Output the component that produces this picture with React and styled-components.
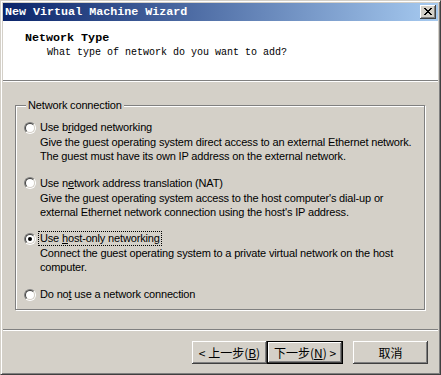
import React from "react";
import styled, { createGlobalStyle, css } from "styled-components";

const GlobalStyle = createGlobalStyle`
  html, body {
    margin: 0;
    padding: 0;
    background: #d4d0c8;
  }
  body {
    font-family: "Liberation Sans", Arial, sans-serif;
    font-size: 11px;
    letter-spacing: -0.16px;
    color: #000;
  }
`;

const bevel = css`
  box-shadow: inset -1px -1px #404040, inset 1px 1px #ffffff,
    inset -2px -2px #808080, inset 2px 2px #d4d0c8;
`;

const Window = styled.div`
  width: 441px;
  height: 375px;
  box-sizing: border-box;
  background: #d4d0c8;
  border: 1px solid;
  border-color: #d4d0c8 #404040 #404040 #d4d0c8;
  box-shadow: inset 1px 1px #ffffff, inset -1px -1px #808080;
  padding: 2px;
  display: flex;
  flex-direction: column;
`;

const TitleBar = styled.div`
  height: 18px;
  flex: none;
  display: flex;
  align-items: center;
  justify-content: space-between;
  padding: 0 2px 0 2px;
  background: linear-gradient(to right, #0a246a, #a6caf0);
`;

const Title = styled.span`
  font-family: "Liberation Mono", "DejaVu Sans Mono", monospace;
  font-weight: bold;
  font-size: 11.7px;
  letter-spacing: 0;
  color: #ffffff;
  line-height: 18px;
`;

const CloseButton = styled.div`
  width: 16px;
  height: 14px;
  background: #d4d0c8;
  ${bevel};
  display: flex;
  align-items: center;
  justify-content: center;
  padding-bottom: 1px;
  box-sizing: border-box;
`;

const Header = styled.div`
  flex: none;
  height: 59px;
  box-sizing: border-box;
  background: #ffffff;
  padding: 10px 22px 0;
  font-family: "Liberation Mono", "DejaVu Sans Mono", monospace;
  letter-spacing: 0;
`;

const HeaderTitle = styled.div`
  font-weight: bold;
  font-size: 11.7px;
  line-height: 14px;
`;

const HeaderSub = styled.div`
  font-size: 10px;
  line-height: 14px;
  padding-left: 22px;
  margin-top: 1px;
`;

const Etched = styled.div`
  flex: none;
  height: 0;
  border-top: 1px solid #808080;
  border-bottom: 1px solid #ffffff;
`;

const Content = styled.div`
  flex: 1;
  padding: 23px 13px 0 12px;
`;

const GroupBox = styled.div`
  position: relative;
  border: 1px solid #808080;
  box-shadow: inset 1px 1px #ffffff, 1px 1px #ffffff;
  padding: 14px 8px 7px 8px;
`;

const Legend = styled.span`
  position: absolute;
  top: -8px;
  left: 10px;
  padding: 0 2px;
  line-height: 14px;
  background: #d4d0c8;
`;

const Options = styled.div`
  display: flex;
  flex-direction: column;
  gap: 12.7px;
`;

const Option = styled.div`
  display: grid;
  grid-template-columns: 12px auto;
  column-gap: 3px;
  align-items: center;
`;

const Radio = styled.span`
  position: relative;
  width: 12px;
  height: 12px;
  box-sizing: border-box;
  border-radius: 50%;
  border: 1px solid;
  border-color: #808080 #ffffff #ffffff #808080;

  &::before {
    content: "";
    position: absolute;
    inset: 0;
    border-radius: 50%;
    border: 1px solid;
    border-color: #404040 #d4d0c8 #d4d0c8 #404040;
    background: #ffffff;
  }

  &::after {
    content: "";
    position: absolute;
    left: 3px;
    top: 3px;
    width: 4px;
    height: 4px;
    border-radius: 50%;
    background: ${(p) => (p.checked ? "#000" : "transparent")};
  }
`;

const Label = styled.span`
  justify-self: start;
  line-height: 13px;
  height: 13px;
  margin: 1px 0;
  padding: 0 1px;
  white-space: nowrap;
  outline: ${(p) => (p.focused ? "1px dotted #000" : "none")};
`;

const Description = styled.div`
  grid-column: 2;
  padding-left: 1px;
  line-height: 14px;
  white-space: nowrap;
`;

const Key = styled.span`
  text-decoration: underline;
`;

const Footer = styled.div`
  flex: none;
  height: 41px;
  box-sizing: border-box;
  padding: 10px 10px 0 0;
  display: flex;
  justify-content: flex-end;
`;

const Button = styled.button`
  width: ${(p) => (p.isDefault ? "76px" : "75px")};
  height: 23px;
  box-sizing: border-box;
  margin: 0;
  padding: 0;
  margin-left: ${(p) => p.gap || 0}px;
  background: #d4d0c8;
  font-family: "Noto Sans CJK SC", "Liberation Sans", sans-serif;
  font-size: 12px;
  letter-spacing: 0;
  color: #000;
  border: ${(p) => (p.isDefault ? "1px solid #000" : "none")};
  ${bevel};
`;

const CloseIcon = () => (
  <svg width="8" height="7" viewBox="0 0 8 7" shapeRendering="crispEdges">
    <path
      d="M0 0h2v1H0zM6 0h2v1H6zM1 1h2v1H1zM5 1h2v1H5zM2 2h4v1H2zM3 3h2v1H3zM2 4h4v1H2zM1 5h2v1H1zM5 5h2v1H5zM0 6h2v1H0zM6 6h2v1H6z"
      fill="#000"
    />
  </svg>
);

const options = [
  {
    label: (
      <>
        Use b<Key>r</Key>idged networking
      </>
    ),
    desc: [
      "Give the guest operating system direct access to an external Ethernet network.",
      "The guest must have its own IP address on the external network.",
    ],
  },
  {
    label: (
      <>
        Use n<Key>e</Key>twork address translation (NAT)
      </>
    ),
    desc: [
      "Give the guest operating system access to the host computer's dial-up or",
      "external Ethernet network connection using the host's IP address.",
    ],
  },
  {
    label: (
      <>
        Use <Key>h</Key>ost-only networking
      </>
    ),
    desc: [
      "Connect the guest operating system to a private virtual network on the host",
      "computer.",
    ],
    checked: true,
  },
  {
    label: (
      <>
        Do no<Key>t</Key> use a network connection
      </>
    ),
    desc: [],
  },
];

export default function App() {
  return (
    <>
      <GlobalStyle />
      <Window>
        <TitleBar>
          <Title>New Virtual Machine Wizard</Title>
          <CloseButton>
            <CloseIcon />
          </CloseButton>
        </TitleBar>
        <Header>
          <HeaderTitle>Network Type</HeaderTitle>
          <HeaderSub>What type of network do you want to add?</HeaderSub>
        </Header>
        <Etched />
        <Content>
          <GroupBox>
            <Legend>Network connection</Legend>
            <Options>
              {options.map((o, i) => (
                <Option key={i}>
                  <Radio checked={o.checked} />
                  <Label focused={o.checked}>{o.label}</Label>
                  {o.desc.length > 0 && (
                    <Description>
                      {o.desc.map((line, j) => (
                        <div key={j}>{line}</div>
                      ))}
                    </Description>
                  )}
                </Option>
              ))}
            </Options>
          </GroupBox>
        </Content>
        <Etched />
        <Footer>
          <Button>
            &lt; 上一步(<Key>B</Key>)
          </Button>
          <Button isDefault>
            下一步(<Key>N</Key>) &gt;
          </Button>
          <Button gap={10}>取消</Button>
        </Footer>
      </Window>
    </>
  );
}
